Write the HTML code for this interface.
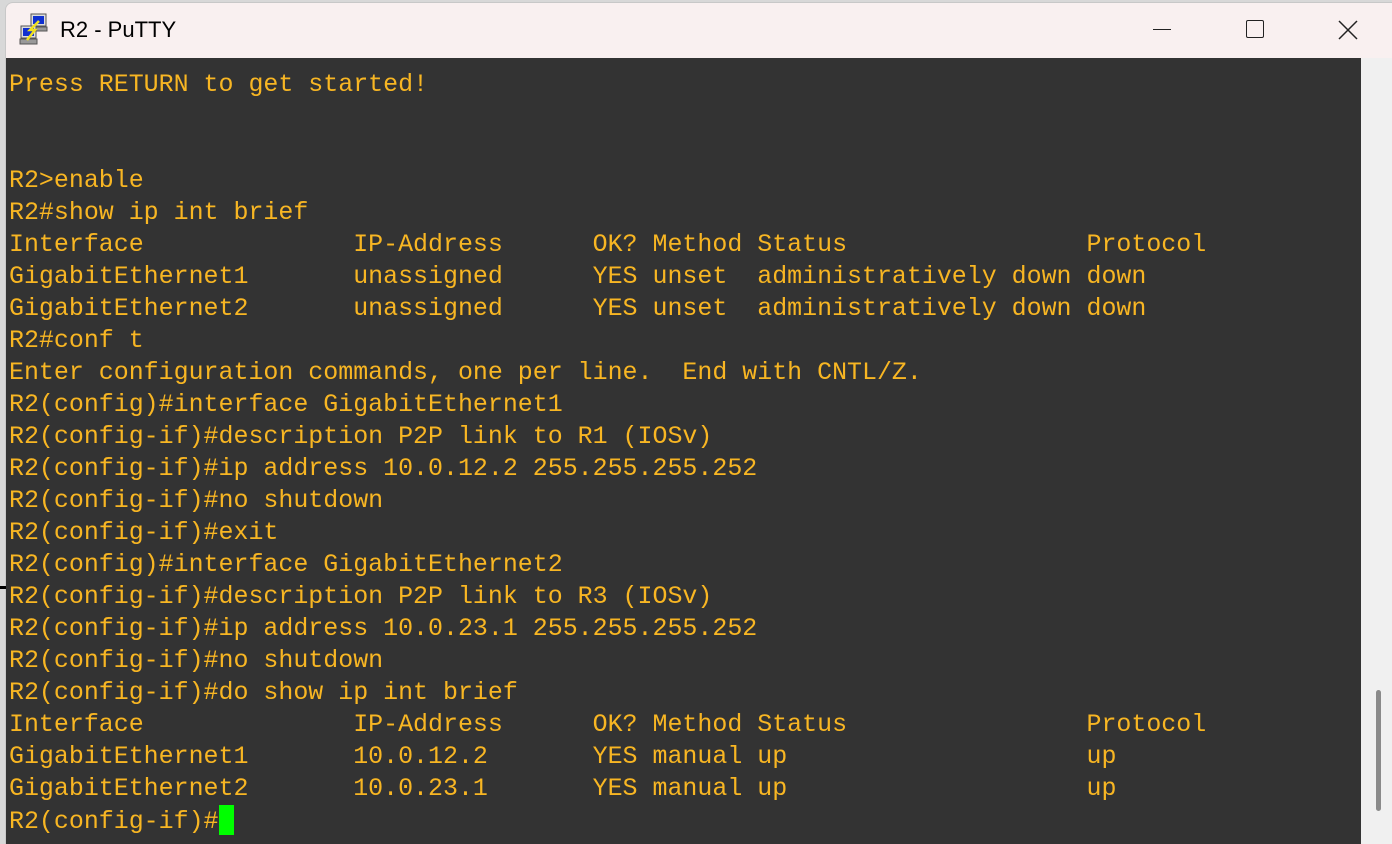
<!DOCTYPE html>
<html><head><style>
html,body{margin:0;padding:0;width:1392px;height:844px;overflow:hidden;background:#d8d8d8;position:relative;}
.win{position:absolute;left:5px;top:2px;width:1387px;height:842px;background:#f9f0f0;border-radius:8px 0 0 0;border-left:1px solid #c8c8c8;border-top:1px solid #c8c8c8;box-sizing:border-box;}
.title{position:absolute;left:60px;top:17px;font:22px "Liberation Sans",sans-serif;color:#000;}
.term{position:absolute;left:6px;top:58px;width:1355px;height:786px;background:#333333;}
.sb{position:absolute;left:1361px;top:58px;width:31px;height:786px;background:#f0f0f0;}
.thumb{position:absolute;left:1376px;top:690px;width:5px;height:121px;background:#8a8a8a;border-radius:3px;}
pre{position:absolute;left:9px;top:69px;margin:0;font:24.95px/32px "Liberation Mono",monospace;color:#f8b623;}
.cur{display:inline-block;width:15px;height:30px;background:#00ff00;vertical-align:-7px;}
</style></head><body>
<div class="win"></div>
<svg style="position:absolute;left:18px;top:13px" width="34" height="34" viewBox="0 0 34 34">
<rect x="13" y="1" width="15" height="12" fill="#ddd" stroke="#555"/><rect x="15" y="3" width="11" height="8" fill="#1030d0"/>
<rect x="12" y="14" width="17" height="4" fill="#999" stroke="#555"/>
<rect x="3" y="13" width="15" height="12" fill="#ddd" stroke="#555"/><rect x="5" y="15" width="11" height="8" fill="#1030d0"/>
<rect x="2" y="26" width="17" height="5" fill="#999" stroke="#555"/>
<path d="M21 8 L12 17 L17 17 L9 27" stroke="#f0e020" stroke-width="2.5" fill="none"/>
</svg>
<div class="title">R2 - PuTTY</div>
<div style="position:absolute;left:1153px;top:29px;width:18px;height:1px;background:#222"></div>
<div style="position:absolute;left:1246px;top:20px;width:16px;height:16px;border:1.5px solid #222;border-radius:2px"></div>
<svg style="position:absolute;left:1338px;top:20px" width="20" height="20"><path d="M1 1L19 19M19 1L1 19" stroke="#222" stroke-width="1.5"/></svg>
<div class="term"></div>
<div class="sb"></div>
<div class="thumb"></div>
<div style="position:absolute;left:0;top:586px;width:6px;height:3px;background:#000"></div>
<pre>Press RETURN to get started!


R2>enable
R2#show ip int brief
Interface              IP-Address      OK? Method Status                Protocol
GigabitEthernet1       unassigned      YES unset  administratively down down
GigabitEthernet2       unassigned      YES unset  administratively down down
R2#conf t
Enter configuration commands, one per line.  End with CNTL/Z.
R2(config)#interface GigabitEthernet1
R2(config-if)#description P2P link to R1 (IOSv)
R2(config-if)#ip address 10.0.12.2 255.255.255.252
R2(config-if)#no shutdown
R2(config-if)#exit
R2(config)#interface GigabitEthernet2
R2(config-if)#description P2P link to R3 (IOSv)
R2(config-if)#ip address 10.0.23.1 255.255.255.252
R2(config-if)#no shutdown
R2(config-if)#do show ip int brief
Interface              IP-Address      OK? Method Status                Protocol
GigabitEthernet1       10.0.12.2       YES manual up                    up
GigabitEthernet2       10.0.23.1       YES manual up                    up
R2(config-if)#<span class="cur"></span></pre>
</body></html>
